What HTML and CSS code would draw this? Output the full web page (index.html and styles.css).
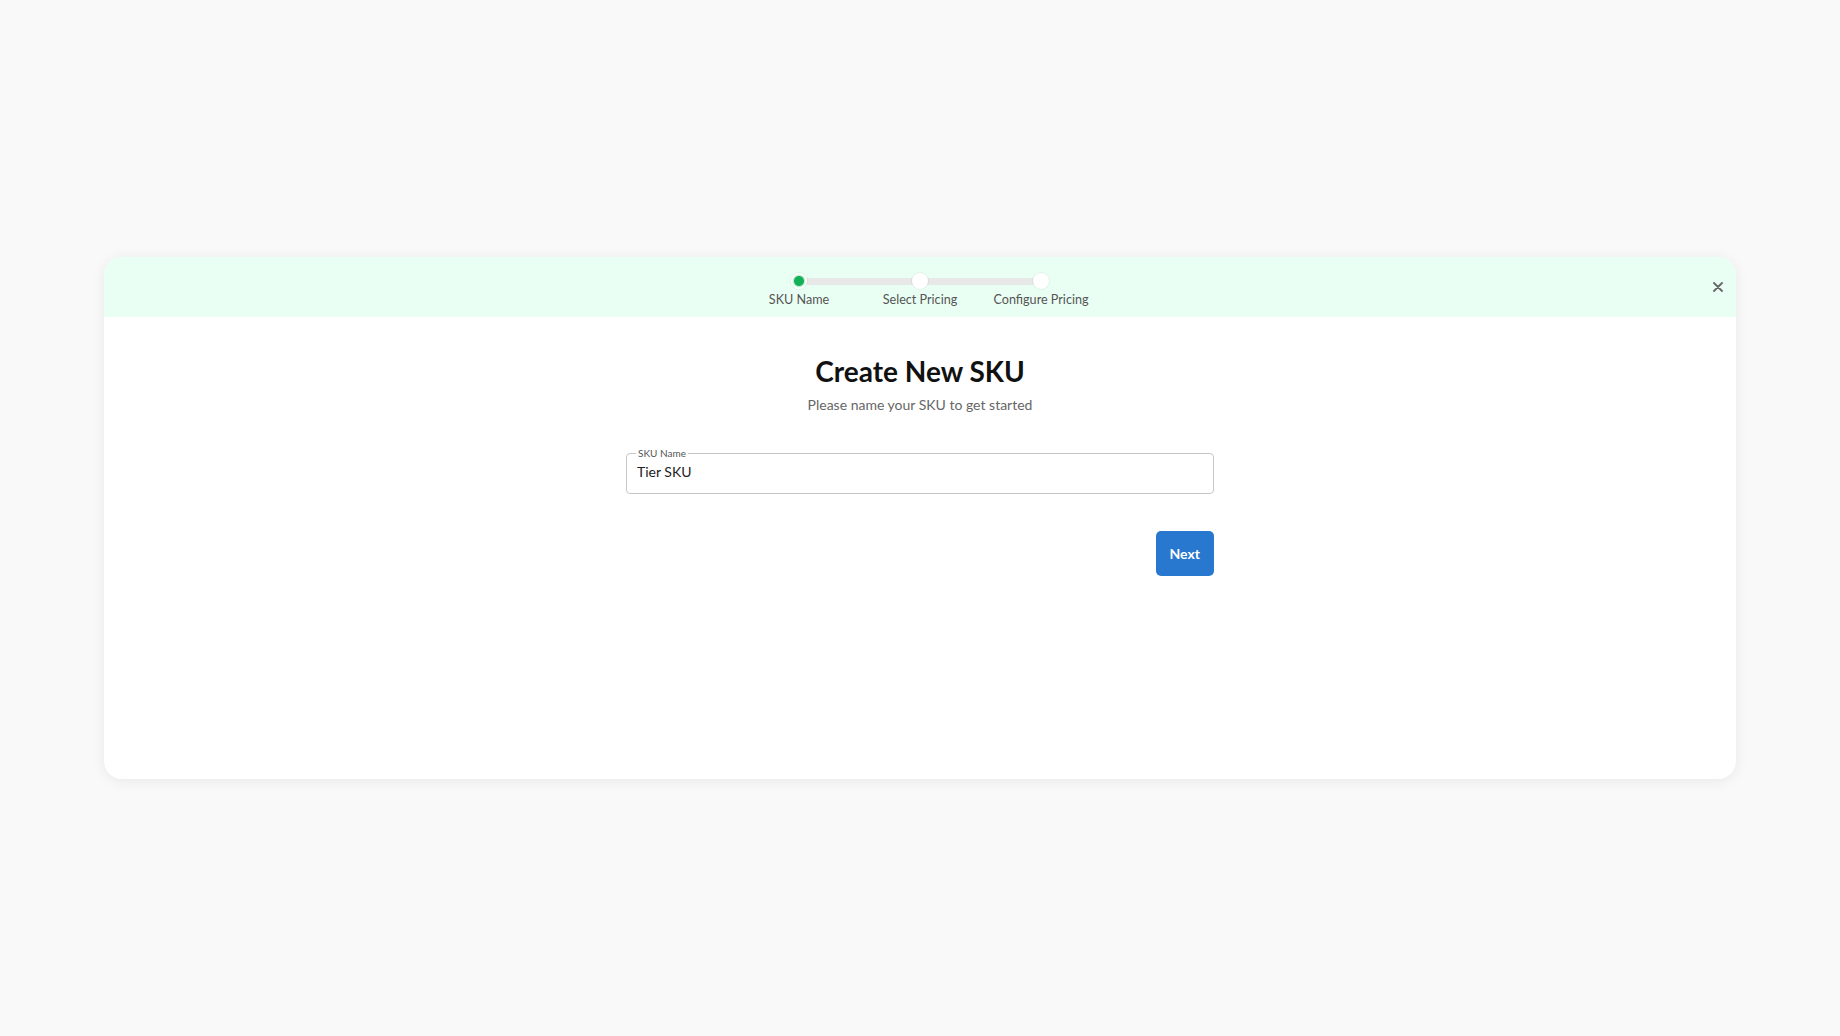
FILE: index.html
```html
<!DOCTYPE html>
<html lang="en">
<head>
    <meta charset="UTF-8">
    <meta name="viewport" content="width=device-width, initial-scale=1.0">
    <title>Create New SKU</title>
    <link rel="stylesheet" href="styles.css">
</head>
<body>

    <div class="modal">
        <!-- Header with stepper -->
        <div class="modal-header">
            <div></div>
            <div class="stepper">
                <div class="step">
                    <span class="dot active"></span>
                    <span class="step-label">SKU Name</span>
                </div>
                <div class="step">
                    <span class="dot"></span>
                    <span class="step-label">Select Pricing</span>
                </div>
                <div class="step">
                    <span class="dot"></span>
                    <span class="step-label">Configure Pricing</span>
                </div>
            </div>
            <button class="close-button" aria-label="Close">
                <svg width="10" height="10" viewBox="0 0 10 10">
                    <path d="M1 1 L9 9 M9 1 L1 9" stroke="#666" stroke-width="1.8" stroke-linecap="round"/>
                </svg>
            </button>
        </div>

        <!-- Body -->
        <div class="modal-body">
            <h1>Create New SKU</h1>
            <p class="subtitle">Please name your SKU to get started</p>

            <form class="sku-form" onsubmit="return false">
                <fieldset class="field">
                    <legend>SKU Name</legend>
                    <input type="text" value="Tier SKU">
                </fieldset>
                <div class="actions">
                    <button class="next-button" type="submit">Next</button>
                </div>
            </form>
        </div>
    </div>

</body>
</html>
```

FILE: styles.css
```css
/* Global Styles */
* {
    box-sizing: border-box;
}

body {
    margin: 0;
    height: 100vh;
    display: flex;
    justify-content: center;
    align-items: center;
    background: #f9f9f9;
    font-family: 'Lato', 'Liberation Sans', sans-serif;
}

/* Modal Card */
.modal {
    width: 1632px;
    height: 522px;
    background: #fff;
    border-radius: 18px;
    box-shadow: 0 2px 14px rgba(0, 0, 0, 0.07);
    overflow: hidden;
}

/* Header */
.modal-header {
    height: 60px;
    background: #eafff4;
    display: grid;
    grid-template-columns: 1fr auto 1fr;
    align-items: start;
}

.close-button {
    justify-self: end;
    align-self: center;
    margin-right: 13px;
    padding: 0;
    width: 10px;
    height: 10px;
    border: none;
    background: none;
    cursor: pointer;
    display: flex;
}

/* Stepper */
.stepper {
    position: relative;
    display: flex;
    padding-top: 16px;
}

.stepper::before {
    content: '';
    position: absolute;
    top: 21px;
    left: 61px;
    right: 61px;
    height: 7px;
    background: #e8e8e8;
}

.step {
    position: relative;
    width: 121px;
    display: flex;
    flex-direction: column;
    align-items: center;
}

.dot {
    width: 16px;
    height: 16px;
    border-radius: 50%;
    background: #fff;
    box-shadow: 0 0 0 1px rgba(0, 0, 0, 0.05);
}

.dot.active {
    background: radial-gradient(circle, #14b057 0, #14b057 4.5px, #bfeed3 5.5px, #fff 7px);
}

.step-label {
    margin-top: 3px;
    font-size: 12.6px;
    color: #555;
    white-space: nowrap;
}

/* Body */
.modal-body {
    display: flex;
    flex-direction: column;
    align-items: center;
    padding-top: 37px;
}

.modal-body h1 {
    margin: 0;
    font-size: 28px;
    font-weight: 700;
    color: #111;
}

.subtitle {
    margin: 8px 0 0;
    font-size: 14px;
    color: #666;
}

/* Form */
.sku-form {
    width: 588px;
    margin-top: 34px;
}

.field {
    margin: 0;
    padding: 4px 9px 13px;
    border: 1px solid #c6c6c6;
    border-radius: 4px;
}

.field legend {
    padding: 0 2px;
    font-size: 10px;
    color: #555;
}

.field input {
    display: block;
    width: 100%;
    height: 17px;
    padding: 0 1px;
    border: none;
    outline: none;
    background: transparent;
    font-family: inherit;
    font-size: 14px;
    color: #222;
}

.actions {
    display: flex;
    justify-content: flex-end;
    margin-top: 37px;
}

.next-button {
    height: 45px;
    padding: 0 14px;
    border: none;
    border-radius: 5px;
    background: #2878d0;
    color: #fff;
    font-family: inherit;
    font-size: 14px;
    font-weight: 700;
    cursor: pointer;
}
```
